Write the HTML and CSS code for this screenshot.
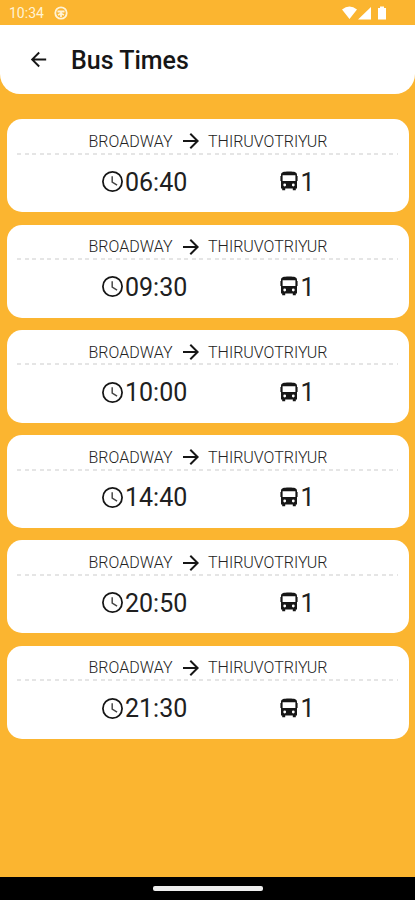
FILE: index.html
```html
<!DOCTYPE html>
<html lang="en">
<head>
<meta charset="utf-8">
<title>Bus Times</title>
<link rel="stylesheet" href="styles.css">
</head>
<body>
<svg width="0" height="0" class="defs">
  <symbol id="arrow" viewBox="0 0 24 24"><path d="M12 4l-1.410 1.410L16.170 11H4v2h12.170l-5.580 5.590L12 20l8-8z"/></symbol>
  <symbol id="clock" viewBox="0 0 24 24"><path fill="none" stroke="#161616" stroke-width="1.700" d="M12 2.800a9.200 9.200 0 1 0 0 18.400 9.200 9.200 0 0 0 0-18.400z"/><path fill="none" stroke="#444" stroke-width="1.400" d="M11.700 7v5.600l4.700 2.800"/></symbol>
  <symbol id="bus" viewBox="0 0 18 20"><path fill-rule="evenodd" d="M1 4C1 1.200 3 .5 9 .5S17 1.200 17 4v13.500h-1.200v1.700h-3v-1.700H5.200v1.700h-3v-1.700H1zM2.600 4.300V10h12.800V4.300zM4.700 12.600a1.400 1.400 0 1 0 0 2.800 1.400 1.400 0 0 0 0-2.800zm8.600 0a1.400 1.400 0 1 0 0 2.800 1.400 1.400 0 0 0 0-2.800z"/><path fill="#777" d="M0 5h1v5H0zM17 5h1v5h-1z"/></symbol>
</svg>
<div class="status">
  <span class="status-time">10:34</span>
  <svg class="badge" viewBox="0 0 14 14"><circle cx="7" cy="7" r="5.700"/><path d="M3.500 5.500h7M7 5.500V11M4 9l3-1.500L10 9"/></svg>
  <span class="spacer"></span>
  <svg class="signals" viewBox="0 0 46 14"><path d="M0 3.500Q7.500-2.500 15 3.500L7.500 13zM16 13.500L29 1v12.500zM36 2h2V.5h4V2h2v11.500h-8z"/></svg>
</div>
<header class="header">
  <svg class="back" viewBox="0 0 24 24"><path d="M20 11H7.830l5.590-5.590L12 4l-8 8 8 8 1.410-1.410L7.830 13H20v-2z"/></svg>
  <h1>Bus Times</h1>
</header>
<main class="list"></main>
<footer class="nav"><span class="handle"></span></footer>
<script src="app.js"></script>
</body>
</html>
```
FILE: styles.css
```css
* { box-sizing: border-box; }
body {
  margin: 0;
  height: 900px;
  display: flex;
  flex-direction: column;
  background: #fbb530;
  font-family: Roboto, "Liberation Sans", sans-serif;
  color: #161616;
  overflow: hidden;
}
svg { display: block; flex: none; }
.defs { position: absolute; }
.status {
  height: 24.500px;
  flex: none;
  display: flex;
  align-items: center;
  padding: 1px 27px 0 9px;
  color: #fff3d6;
}
.status-time { font-size: 14px; width: 45px; }
.badge { width: 14px; height: 14px; fill: none; stroke: #fff3d6; stroke-width: 1.800; }
.spacer { flex: 1; }
.signals { width: 46px; height: 14px; fill: #fff; }
.header {
  height: 69px;
  flex: none;
  display: flex;
  align-items: center;
  padding: 1px 0 0 27px;
  background: #fff;
  border-radius: 0 0 20px 20px;
}
.back { width: 23px; height: 23px; fill: #161616; }
h1 { margin: 1px 0 0 21px; font-size: 25px; font-weight: 500; }
.list {
  flex: 1;
  padding: 25.800px 6px 0 6.500px;
  display: flex;
  flex-direction: column;
  gap: 12.300px;
}
.card { height: 93px; flex: none; background: #fff; border-radius: 15px; padding: 0 11px 0 10px; }
.route {
  height: 33.500px;
  display: flex;
  padding: 10.700px 0 0 72px;
  font-size: 16px;
  line-height: 23px;
  font-weight: 300;
  color: #222;
}
.from { width: 90px; }
.route svg { width: 24px; height: 24px; fill: #161616; margin: -.5px 5.500px 0 0; }
.dashes {
  height: 2px;
  background: repeating-linear-gradient(90deg, #e5e5e5 0 4px, transparent 4px 7.600px);
}
.info { display: flex; align-items: center; height: 54.500px; font-size: 25px; font-weight: 400; color: #202020; }
.time { display: flex; align-items: center; width: 178px; padding-left: 83.500px; }
.time svg { width: 25px; height: 25px; margin: -1px 0 0; }
.bus { display: flex; align-items: center; padding-left: 85px; }
.bus svg { width: 18px; height: 20px; fill: #161616; margin: -2px 3px 0 0; }
.nav { height: 23px; flex: none; background: #000; display: flex; justify-content: center; padding-top: 9px; }
.handle { width: 110px; height: 4.500px; border-radius: 2px; background: #eee; }
```
FILE: app.js
```js
const times = ["06:40", "09:30", "10:00", "14:40", "20:50", "21:30"];
document.querySelector(".list").innerHTML = times.map(t => `
  <section class="card">
    <div class="route"><span class="from">BROADWAY</span><svg><use href="#arrow"/></svg><span class="to">THIRUVOTRIYUR</span></div>
    <div class="dashes"></div>
    <div class="info">
      <div class="time"><svg><use href="#clock"/></svg><span>${t}</span></div>
      <div class="bus"><svg><use href="#bus"/></svg><span>1</span></div>
    </div>
  </section>`).join("");
```
